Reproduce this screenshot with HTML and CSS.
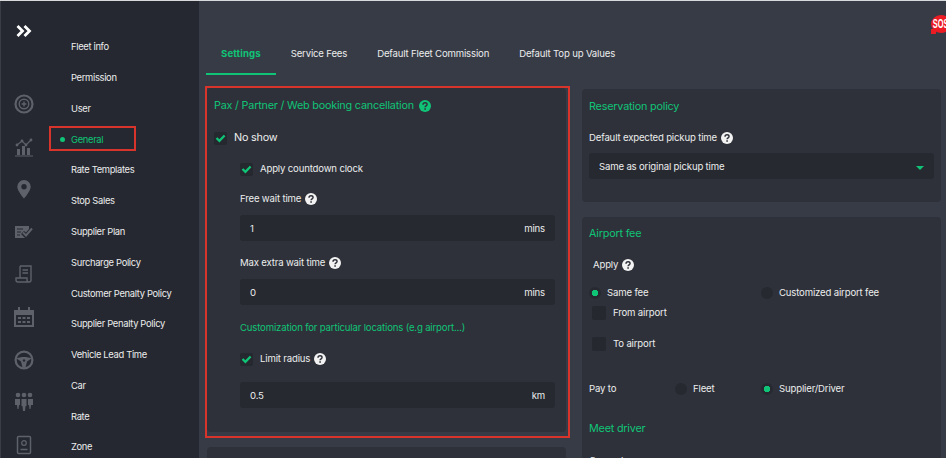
FILE: index.html
```html
<!DOCTYPE html>
<html lang="en">
<head>
    <meta charset="UTF-8">
    <meta name="viewport" content="width=device-width, initial-scale=1.0">
    <title>General settings</title>
    <link rel="stylesheet" href="styles.css">
</head>
<body>

    <svg width="0" height="0" class="defs">
        <symbol id="help" viewBox="0 0 14 14">
            <circle cx="7" cy="7" r="7" fill="currentColor"/>
            <path d="M4.7 5.4c0-1.4 1-2.2 2.4-2.2s2.3.8 2.3 2c0 1.7-2.3 1.7-2.3 3.4" fill="none" stroke="#2e313a" stroke-width="1.7"/>
            <rect x="6.2" y="9.6" width="1.8" height="1.8" fill="#2e313a"/>
        </symbol>
        <symbol id="check" viewBox="0 0 13 13">
            <path d="M2.500 6l2.900 2.900 5.200-5.400" fill="none" stroke="#10c477" stroke-width="2.300"/>
        </symbol>
    </svg>

    <div class="app">
        <!-- Icon rail -->
        <aside class="rail">
            <svg class="toggle" width="18" height="14" viewBox="0 0 18 14"><path d="M2.500 2l5 5-5 5M9.500 2l5 5-5 5" fill="none" stroke="#fff" stroke-width="2.800"/></svg>
            <div class="rail-icons">
                <svg width="20" height="20" viewBox="0 0 20 20"><circle cx="10" cy="10" r="8.500" fill="none" stroke="currentColor" stroke-width="2.200"/><circle cx="10" cy="10" r="4.800" fill="none" stroke="currentColor" stroke-width="1.400"/><path d="M10 7.600v4.800M7.600 10h4.800" stroke="currentColor" stroke-width="1.400"/></svg>
                <svg width="20" height="20" viewBox="0 0 20 20"><path d="M3 12h3v6H3zM8 9h3v9H8zM13 11h3v7h-3zM1 18.500h18v1H1z" fill="currentColor"/><path d="M3 8l5-4 4 4 5-5" fill="none" stroke="currentColor" stroke-width="1.200"/><circle cx="3" cy="8" r="1.400" fill="currentColor"/><circle cx="8" cy="4" r="1.400" fill="currentColor"/><circle cx="12" cy="8" r="1.400" fill="currentColor"/><circle cx="17" cy="3" r="1.400" fill="currentColor"/></svg>
                <svg width="20" height="20" viewBox="0 0 20 20"><path d="M10 1a6.700 6.700 0 0 0-6.700 6.700C3.300 12 10 19.500 10 19.500s6.700-7.500 6.700-11.800A6.700 6.700 0 0 0 10 1zm0 9.400a2.700 2.700 0 1 1 0-5.400 2.700 2.700 0 0 1 0 5.400z" fill="currentColor"/></svg>
                <svg width="20" height="20" viewBox="0 0 20 20"><path d="M1 4h14v3l-3 3.500L10 9l-3 3 4 4H1z" fill="currentColor"/><path d="M3 7h6M3 10h4M3 13h3" stroke="#252830" stroke-width="1"/><path d="M9 10.500l3 3 6-7" fill="none" stroke="currentColor" stroke-width="2"/></svg>
                <svg width="20" height="20" viewBox="0 0 20 20"><path d="M6 2h11v14a2 2 0 0 1-2 2H4a2 2 0 0 1-2-2v-2h11v2a2 2 0 0 0 2 2M6 14V2M8.500 6H14M8.500 9H14" fill="none" stroke="currentColor" stroke-width="1.400"/></svg>
                <svg width="20" height="20" viewBox="0 0 20 20"><path d="M0 3h4V0h2v3h8V0h2v3h4v17H0zm2 5v10h16V8zM4 10h3v2H4zm4.500 0h3v2h-3zm4.500 0h3v2h-3zM4 14h3v2H4zm4.500 0h3v2h-3zm4.500 0h3v2h-3z" fill="currentColor" fill-rule="evenodd"/></svg>
                <svg width="20" height="20" viewBox="0 0 20 20"><circle cx="10" cy="10" r="8.400" fill="none" stroke="currentColor" stroke-width="2.200"/><path d="M2.500 8.500c4-2 11-2 15 0l-4.500 3-1.500 6h-3l-1.500-6z" fill="currentColor"/><circle cx="10" cy="10.500" r="1.200" fill="#252830"/></svg>
                <svg width="20" height="20" viewBox="0 0 20 20"><circle cx="4" cy="3" r="2.300" fill="currentColor"/><circle cx="10" cy="3" r="2.300" fill="currentColor"/><circle cx="16" cy="3" r="2.300" fill="currentColor"/><path d="M1 7h5v6H5l-.5 4h-1L3 13H1zM7.500 7h5v7h-1l-.5 5H9l-.5-5h-1zM14 7h5v6h-2l-.5 4h-1l-.5-4h-1z" fill="currentColor"/></svg>
                <svg width="20" height="20" viewBox="0 0 20 20"><rect x="3.500" y="1.500" width="13" height="17" rx="1" fill="none" stroke="currentColor" stroke-width="1.500"/><circle cx="10" cy="8" r="2.300" fill="none" stroke="currentColor" stroke-width="1.300"/><path d="M6.500 14.500h7" stroke="currentColor" stroke-width="1.500"/></svg>
            </div>
        </aside>

        <!-- Settings menu -->
        <nav class="menu">
            <ul>
                <li>Fleet info</li>
                <li>Permission</li>
                <li>User</li>
                <li class="active">General<span class="mark"></span></li>
                <li>Rate Templates</li>
                <li>Stop Sales</li>
                <li>Supplier Plan</li>
                <li>Surcharge Policy</li>
                <li>Customer Penalty Policy</li>
                <li>Supplier Penalty Policy</li>
                <li>Vehicle Lead Time</li>
                <li>Car</li>
                <li>Rate</li>
                <li>Zone</li>
            </ul>
        </nav>

        <main class="content">
            <div class="sos"><span>SOS</span></div>

            <div class="tabs">
                <a class="tab current">Settings</a>
                <a class="tab">Service Fees</a>
                <a class="tab">Default Fleet Commission</a>
                <a class="tab">Default Top up Values</a>
            </div>

            <div class="columns">
                <div class="column">
                    <section class="card cancel-card">
                        <span class="mark-box"></span>
                        <h3 class="title">Pax / Partner / Web booking cancellation <svg class="help green"><use href="#help"/></svg></h3>
                        <label class="check big"><span class="box"><svg width="13" height="13"><use href="#check"/></svg></span>No show</label>

                        <div class="nested">
                            <label class="check"><span class="box"><svg width="13" height="13"><use href="#check"/></svg></span>Apply countdown clock</label>
                            <p class="label wait-label">Free wait time <svg class="help"><use href="#help"/></svg></p>
                            <div class="field"><span>1</span><span class="unit">mins</span></div>
                            <p class="label extra-label">Max extra wait time <svg class="help"><use href="#help"/></svg></p>
                            <div class="field"><span>0</span><span class="unit">mins</span></div>
                            <p class="sub-title">Customization for particular locations (e.g airport...)</p>
                            <label class="check radius"><span class="box"><svg width="13" height="13"><use href="#check"/></svg></span>Limit radius <svg class="help"><use href="#help"/></svg></label>
                            <div class="field radius-field"><span>0.5</span><span class="unit">km</span></div>
                        </div>
                    </section>
                    <section class="card next-card"></section>
                </div>

                <div class="column right">
                    <section class="card policy-card">
                        <h3 class="title">Reservation policy</h3>
                        <p class="label pickup-label">Default expected pickup time <svg class="help"><use href="#help"/></svg></p>
                        <div class="field select"><span>Same as original pickup time</span><span class="arrow"></span></div>
                    </section>

                    <section class="card airport-card">
                        <h3 class="title">Airport fee</h3>
                        <p class="label apply-label">Apply <svg class="help"><use href="#help"/></svg></p>
                        <div class="radio-row">
                            <label class="radio on">Same fee</label>
                            <label class="radio">Customized airport fee</label>
                        </div>
                        <label class="check plain from"><span class="box"></span>From airport</label>
                        <label class="check plain to"><span class="box"></span>To airport</label>
                        <div class="pay-row">
                            <span>Pay to</span>
                            <label class="radio">Fleet</label>
                            <label class="radio on">Supplier/Driver</label>
                        </div>
                        <h3 class="title meet">Meet driver</h3>
                        <p class="label">General</p>
                    </section>
                </div>
            </div>
        </main>
    </div>

</body>
</html>
```

FILE: styles.css
```css
* {
    box-sizing: border-box;
}
html, body {
    margin: 0;
    height: 100%;
    overflow: hidden;
}
body {
    font-family: Inter, "Noto Sans", sans-serif;
    font-size: 9.600px;
    letter-spacing: -.17px;
    color: #eceded;
    background-color: #373b46;
    border-top: 1px solid #d8d9db;
}
.defs {
    position: absolute;
}
.app {
    display: flex;
    height: 457px;
    overflow: hidden;
}
/* Icon rail */
.rail {
    width: 48px;
    flex-shrink: 0;
    background-color: #252830;
    border-left: 1px solid #3a3d45;
    display: flex;
    flex-direction: column;
    align-items: center;
    padding: 23px 1px 0 0;
}
.rail-icons {
    display: flex;
    flex-direction: column;
    align-items: center;
    gap: 22.600px;
    margin-top: 56px;
    color: #5e616a;
}
.rail-icons svg {
    flex-shrink: 0;
}
/* Menu */
.menu {
    width: 151px;
    flex-shrink: 0;
    background-color: #252830;
}
.menu ul {
    list-style: none;
    margin: 0;
    padding: 30.500px 0 0 23px;
    display: grid;
    grid-auto-rows: 30.770px;
    align-items: center;
    font-size: 9.400px;
    letter-spacing: -.33px;
}
.menu li {
    position: relative;
}
.menu .active {
    color: #10c477;
}
.menu .active::before {
    content: "";
    position: absolute;
    left: -11px;
    top: 3px;
    width: 5px;
    height: 5px;
    border-radius: 50%;
    background-color: #10c477;
}
.menu .mark {
    position: absolute;
    left: -22px;
    top: -8px;
    width: 87px;
    height: 25px;
    border: 2px solid #d9342b;
}
/* Main area */
.content {
    flex-grow: 1;
    position: relative;
    padding-left: 7px;
    min-width: 0;
}
.sos {
    position: absolute;
    top: 14px;
    left: 732px;
    width: 20px;
    height: 18px;
    border-radius: 50%;
    background-color: #ec1c24;
    display: flex;
    align-items: center;
    justify-content: center;
}
.sos::after {
    content: "";
    position: absolute;
    left: 0;
    bottom: -1px;
    width: 5px;
    height: 5px;
    background-color: #ec1c24;
}
.sos span {
    color: #fff;
    font: bold 12px "Liberation Sans", sans-serif;
    letter-spacing: 0;
    transform: scaleX(.62);
    position: relative;
    z-index: 1;
}
.tabs {
    display: flex;
    padding-top: 35px;
    height: 75px;
}
.tab {
    padding: 12px 15px 0;
    height: 39px;
}
.tab.current {
    color: #10c477;
    font-size: 9.600px;
    letter-spacing: .12px;
    font-weight: 700;
    border-bottom: 2px solid #10c477;
}
.columns {
    display: flex;
    gap: 16px;
    padding: 12px 0 0 1px;
}
.column {
    width: 359px;
    flex-shrink: 0;
    display: flex;
    flex-direction: column;
    gap: 15px;
}
.column.right {
    padding-top: 1px;
}
.card {
    background-color: #2e313a;
    border-radius: 4px;
    padding: 11px 7px;
    position: relative;
}
.cancel-card {
    height: 344px;
}
.next-card {
    height: 60px;
}
.policy-card {
    height: 113px;
}
.airport-card {
    height: 300px;
    padding-top: 10px;
}
.mark-box {
    position: absolute;
    inset: -2px -4px -6px -2px;
    border: 2px solid #d9342b;
    pointer-events: none;
}
.title {
    margin: 0;
    font-size: 10.800px;
    letter-spacing: -.2px;
    font-weight: 400;
    line-height: 14px;
    color: #10c477;
    display: flex;
    align-items: center;
    gap: 5px;
}
.label, .check {
    margin: 0;
    display: flex;
    align-items: center;
    gap: 4px;
    line-height: 14px;
}
.help {
    width: 12px;
    height: 12px;
    color: #f2f2f2;
    flex-shrink: 0;
}
.help.green {
    color: #10c477;
}
.check {
    gap: 7px;
}
.box {
    width: 13px;
    height: 13px;
    border-radius: 2px;
    background-color: #25282f;
    flex-shrink: 0;
    display: flex;
}
.check.big {
    font-size: 10.800px;
    letter-spacing: -.2px;
    margin-top: 18px;
}
.nested {
    padding: 0 4px 0 26px;
    margin-top: 17px;
}
.wait-label {
    margin-top: 16px;
}
.field {
    height: 26px;
    margin-top: 9px;
    padding: 0 10px;
    background-color: #262930;
    border-radius: 3px;
    display: flex;
    align-items: center;
    justify-content: space-between;
}
.extra-label {
    margin-top: 15px;
}
.sub-title {
    margin: 16px 0 0;
    line-height: 14px;
    color: #10c477;
}
.radius {
    margin-top: 17px;
}
.radius .help {
    margin-left: -3px;
}
.radius-field {
    margin-top: 16px;
}
.pickup-label {
    margin-top: 17px;
}
.select {
    width: 345px;
    margin-top: 8px;
}
.arrow {
    width: 0;
    height: 0;
    border-left: 4px solid transparent;
    border-right: 4px solid transparent;
    border-top: 4px solid #10c477;
    margin-top: 3px;
}
.apply-label {
    margin: 17px 0 0 4px;
}
.radio-row, .pay-row {
    display: flex;
    align-items: center;
    line-height: 14px;
}
.radio-row {
    margin-top: 14px;
}
.radio {
    display: flex;
    align-items: center;
    gap: 6px;
}
.radio::before {
    content: "";
    width: 12px;
    height: 12px;
    border-radius: 50%;
    background-color: #262930;
    flex-shrink: 0;
}
.radio.on::before {
    background: radial-gradient(circle, #10c477 0 3px, #262930 3.500px);
}
.radio-row .radio:first-child {
    width: 172px;
}
.plain {
    margin-left: 3px;
}
.plain .box {
    width: 14px;
    height: 14px;
}
.from {
    margin-top: 6px;
}
.to {
    margin-top: 17px;
}
.pay-row {
    margin-top: 31px;
}
.pay-row span {
    width: 86px;
}
.pay-row .radio:nth-child(2) {
    width: 86px;
}
.meet {
    margin-top: 26px;
}
.meet + .label {
    margin-top: 18px;
}
```
